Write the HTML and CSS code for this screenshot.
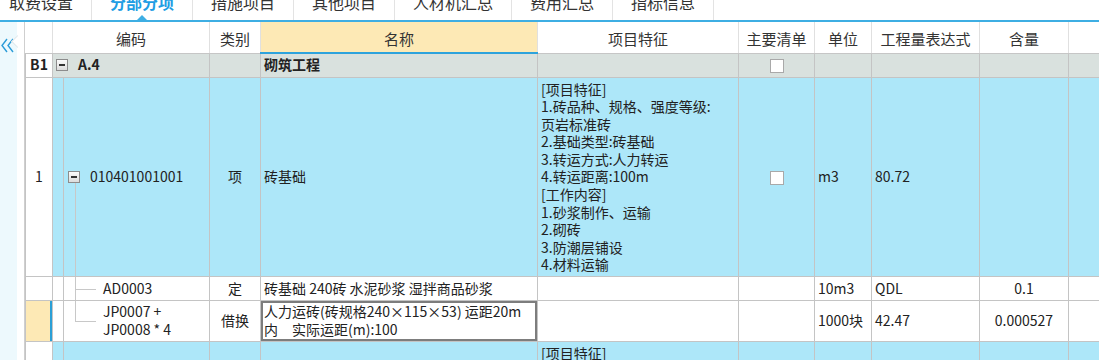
FILE: index.html
```html
<!DOCTYPE html>
<html lang="zh-CN">
<head>
    <meta charset="UTF-8">
    <title>分部分项</title>
    <link rel="stylesheet" href="styles.css">
</head>
<body>

    <!-- Tab bar -->
    <div class="tabs">
        <div class="tab">取费设置</div>
        <div class="tab active">分部分项</div>
        <div class="tab">措施项目</div>
        <div class="tab">其他项目</div>
        <div class="tab">人材机汇总</div>
        <div class="tab">费用汇总</div>
        <div class="tab">指标信息</div>
    </div>

    <div class="workspace">
        <!-- Collapsed side panel -->
        <div class="side">
            <svg class="collapse" width="13" height="15" viewBox="0 0 13 15">
                <polyline points="6,1 1,7.5 6,14" />
                <polyline points="12,1 7,7.5 12,14" />
            </svg>
            <span class="notch"></span>
        </div>

        <!-- Bill grid -->
        <div class="grid-wrap">
            <table class="grid">
                <colgroup>
                    <col class="c-no">
                    <col class="c-code">
                    <col class="c-type">
                    <col class="c-name">
                    <col class="c-feat">
                    <col class="c-main">
                    <col class="c-unit">
                    <col class="c-expr">
                    <col class="c-qty">
                    <col class="c-extra">
                </colgroup>
                <thead>
                    <tr class="head">
                        <th></th>
                        <th>编码</th>
                        <th>类别</th>
                        <th class="sorted">名称</th>
                        <th>项目特征</th>
                        <th>主要清单</th>
                        <th>单位</th>
                        <th>工程量表达式</th>
                        <th>含量</th>
                        <th></th>
                    </tr>
                </thead>
                <tbody>
                    <tr class="section">
                        <td class="no">B1</td>
                        <td class="code lvl0">
                            <div class="node"><span class="toggle"></span><span>A.4</span></div>
                        </td>
                        <td></td>
                        <td>砌筑工程</td>
                        <td></td>
                        <td class="center"><span class="check"></span></td>
                        <td></td>
                        <td></td>
                        <td></td>
                        <td></td>
                    </tr>
                    <tr class="bill">
                        <td class="no">1</td>
                        <td class="code lvl1 tree-start">
                            <div class="node"><span class="toggle"></span><span>010401001001</span></div>
                        </td>
                        <td class="center">项</td>
                        <td>砖基础</td>
                        <td class="feat">
                            [项目特征]<br>
                            1.砖品种、规格、强度等级:<br>
                            页岩标准砖<br>
                            2.基础类型:砖基础<br>
                            3.转运方式:人力转运<br>
                            4.转运距离:100m<br>
                            [工作内容]<br>
                            1.砂浆制作、运输<br>
                            2.砌砖<br>
                            3.防潮层铺设<br>
                            4.材料运输
                        </td>
                        <td class="center"><span class="check"></span></td>
                        <td>m3</td>
                        <td>80.72</td>
                        <td></td>
                        <td></td>
                    </tr>
                    <tr class="quota">
                        <td class="no"></td>
                        <td class="code lvl2 tree-mid">AD0003</td>
                        <td class="center">定</td>
                        <td>砖基础 240砖 水泥砂浆 湿拌商品砂浆</td>
                        <td></td>
                        <td></td>
                        <td>10m3</td>
                        <td>QDL</td>
                        <td class="center">0.1</td>
                        <td></td>
                    </tr>
                    <tr class="quota current">
                        <td class="no"></td>
                        <td class="code lvl2 tree-end">JP0007 +<br>JP0008 * 4</td>
                        <td class="center">借换</td>
                        <td class="editing">人力运砖(砖规格240×115×53) 运距20m<br>内　实际运距(m):100</td>
                        <td></td>
                        <td></td>
                        <td>1000块</td>
                        <td>42.47</td>
                        <td class="center">0.000527</td>
                        <td></td>
                    </tr>
                    <tr class="bill">
                        <td class="no"></td>
                        <td class="code"></td>
                        <td></td>
                        <td></td>
                        <td class="feat top">
                            [项目特征]<br>
                            1.砖品种、规格、强度等级:<br>
                            页岩标准砖
                        </td>
                        <td></td>
                        <td></td>
                        <td></td>
                        <td></td>
                        <td></td>
                    </tr>
                </tbody>
            </table>
        </div>
    </div>

</body>
</html>
```

FILE: styles.css
```css
/* General */
* {
    margin: 0;
    padding: 0;
    box-sizing: border-box;
}

body {
    width: 1099px;
    height: 360px;
    overflow: hidden;
    background-color: #fff;
    font-family: "Noto Sans CJK SC", sans-serif;
    color: #222;
}

/* Tabs */
.tabs {
    display: flex;
    height: 22px;
    margin-left: -9px;
    border-bottom: 2px solid #3eaee3;
    overflow: hidden;
}

.tab {
    position: relative;
    height: 29px;
    margin-top: -9px;
    padding: 0 18px;
    line-height: 22px;
    font-size: 16px;
    color: #333;
    border-right: 1px solid #e3e3e3;
    white-space: nowrap;
}

.tab.active {
    color: #1e9de3;
    font-weight: 600;
}

.tab.active::after {
    content: "";
    position: absolute;
    left: 50%;
    bottom: 0;
    margin-left: -5px;
    border-left: 5px solid transparent;
    border-right: 5px solid transparent;
    border-bottom: 5px solid #3eaee3;
}

/* Workspace */
.workspace {
    display: flex;
    height: 338px;
}

.side {
    position: relative;
    width: 17px;
    flex-shrink: 0;
    padding: 12px 0 0 1px;
    background-color: #edf9fd;
}

.collapse polyline {
    fill: none;
    stroke: #2a9bd8;
    stroke-width: 1.4;
}

.notch {
    position: absolute;
    top: 15px;
    right: -5px;
    width: 9px;
    height: 9px;
    transform: rotate(45deg);
    background-color: #fff;
    border-left: 1px solid #dde6ea;
    border-bottom: 1px solid #dde6ea;
}

.grid-wrap {
    margin-left: 7px;
    border-left: 1px solid #cfcfcf;
    overflow: hidden;
    flex: 1;
}

/* Grid */
.grid {
    table-layout: fixed;
    border-collapse: collapse;
    width: 1143px;
    font-size: 14px;
    line-height: 17.6px;
}

.c-no { width: 27px; }
.c-code { width: 157px; }
.c-type { width: 51px; }
.c-name { width: 277px; }
.c-feat { width: 201px; }
.c-main { width: 76px; }
.c-unit { width: 57px; }
.c-expr { width: 108px; }
.c-qty { width: 89px; }
.c-extra { width: 100px; }

.grid th {
    height: 31px;
    padding-top: 4px;
    font-size: 15px;
    font-weight: normal;
    color: #333;
    background-color: #fff;
    border-right: 1px solid #e0e0e0;
    border-bottom: 1px solid #c6c6c6;
}

.grid th.sorted {
    background-color: #fde9b5;
    border-bottom: 2px solid #2ea3dc;
}

.grid td {
    padding: 0 3px;
    border: 1px solid #c4c4c4;
    white-space: nowrap;
    vertical-align: middle;
}

.grid td.center {
    text-align: center;
}

.grid td.no {
    text-align: center;
    background-color: #fff;
}

.section td {
    height: 24px;
    background-color: #d9e1de;
    font-weight: bold;
}

.bill td {
    background-color: #ade7f9;
}

.quota td {
    height: 24px;
    background-color: #fff;
}

.quota.current td {
    height: 41px;
}

.quota.current td.no {
    background-color: #fde9b5;
    box-shadow: inset -2px 0 0 #2a9fd6;
}

.grid td.feat {
    padding: 3px 3px 2px;
    vertical-align: top;
}

.grid td.editing {
    box-shadow: inset 0 0 0 2px #7d7d7d;
}

/* Tree column */
.grid td.code {
    position: relative;
    background-image: linear-gradient(#c4c4c4, #c4c4c4);
    background-size: 1px 100%;
    background-position: 10px 0;
    background-repeat: no-repeat;
}

.grid td.lvl0 {
    padding-left: 3px;
    background-image: none;
}

.grid td.lvl1 {
    padding-left: 15px;
}

.grid td.lvl2 {
    padding-left: 50px;
}

.node {
    position: relative;
    z-index: 1;
    display: flex;
    align-items: center;
    gap: 10px;
}

.toggle {
    position: relative;
    width: 12px;
    height: 12px;
    flex-shrink: 0;
    border: 1px solid #8c8c8c;
    background: linear-gradient(#fbfbfb, #dcdcdc);
}

.toggle::after {
    content: "";
    position: absolute;
    left: 2px;
    right: 2px;
    top: 4px;
    height: 2px;
    background-color: #333;
}

.tree-start::before,
.tree-mid::before,
.tree-end::before,
.tree-mid::after,
.tree-end::after {
    content: "";
    position: absolute;
    background-color: #c8c8c8;
}

.tree-start::before {
    left: 22px;
    top: 50%;
    bottom: 0;
    width: 1px;
}

.tree-mid::before {
    left: 22px;
    top: 0;
    bottom: 0;
    width: 1px;
}

.tree-end::before {
    left: 22px;
    top: 0;
    height: 50%;
    width: 1px;
}

.tree-mid::after,
.tree-end::after {
    left: 22px;
    top: 50%;
    width: 21px;
    height: 1px;
}

.check {
    display: inline-block;
    width: 14px;
    height: 14px;
    vertical-align: middle;
    background-color: #fff;
    border: 1px solid #a9a9a9;
}
```
